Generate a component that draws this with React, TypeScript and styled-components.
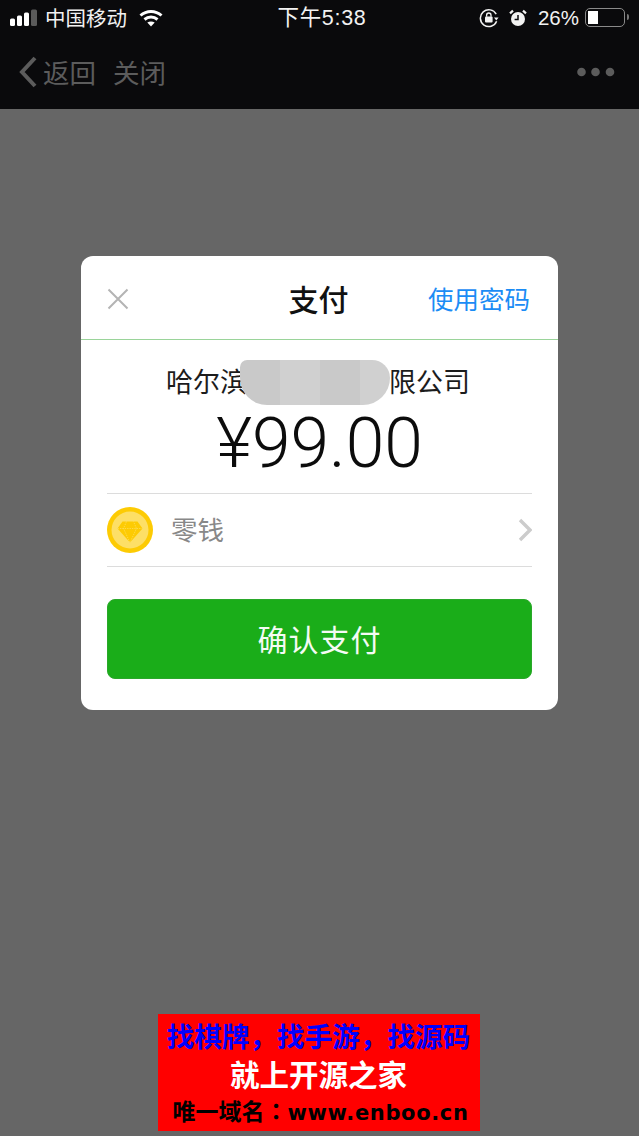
import React from "react";
import styled, { createGlobalStyle } from "styled-components";

const CJK = `"Liberation Sans", "Noto Sans CJK SC", sans-serif`;

const GlobalStyle = createGlobalStyle`
  html, body {
    margin: 0;
    padding: 0;
    background: #666666;
    font-family: ${CJK};
  }
  * {
    box-sizing: border-box;
  }
`;

const Screen = styled.div`
  width: 639px;
  height: 1136px;
  display: flex;
  flex-direction: column;
  overflow: hidden;
  background: #666666;
`;

const TopArea = styled.header`
  height: 109px;
  flex-shrink: 0;
  background: #0a0a0c;
`;

const StatusBar = styled.div`
  height: 36px;
  padding: 0 10px 2px;
  display: grid;
  grid-template-columns: 1fr auto 1fr;
  align-items: center;
  color: #f2f2f2;
  font-size: 20.5px;
`;

const StatusLeft = styled.div`
  display: flex;
  align-items: center;
`;

const StatusRight = styled.div`
  display: flex;
  align-items: center;
  justify-content: flex-end;
  padding-right: 4px;
  gap: 10px;
`;

const Carrier = styled.span`
  margin: 0 12px 2px 7px;
`;

const Time = styled.span`
  margin: 0 0 4px 5px;
  font-size: 21.5px;
  letter-spacing: 0.7px;
`;

const Percent = styled.span`
  margin: 0 -4px 0 1px;
`;

const Battery = styled.div`
  width: 40px;
  height: 19px;
  padding: 2px;
  border: 1.5px solid #8a8a8a;
  border-radius: 5px;
  position: relative;
  &::after {
    content: "";
    position: absolute;
    right: -5px;
    top: 5px;
    width: 2px;
    height: 6px;
    background: #777;
    border-radius: 0 2px 2px 0;
  }
`;

const BatteryFill = styled.div`
  width: 10px;
  height: 100%;
  background: #fff;
`;

const NavBar = styled.nav`
  height: 73px;
  padding: 0 24px 2px 19px;
  display: flex;
  align-items: center;
  color: #5c5c5c;
  font-size: 26.5px;
`;

const NavBack = styled.span`
  margin-left: 6px;
`;

const NavClose = styled.span`
  margin-left: 17px;
  flex: 1;
`;

const Content = styled.main`
  flex: 1;
  display: flex;
  flex-direction: column;
  align-items: center;
  padding: 147px 0 5px;
`;

const Modal = styled.section`
  width: 477px;
  height: 454px;
  background: #fff;
  border-radius: 12px;
  overflow: hidden;
`;

const ModalHeader = styled.div`
  height: 84px;
  padding: 2px 28px 0 26px;
  display: grid;
  grid-template-columns: 1fr auto 1fr;
  align-items: center;
  border-bottom: 1px solid #9ad49a;
`;

const ModalTitle = styled.h2`
  margin: 0 0 2px;
  font-size: 30px;
  font-weight: 500;
  color: #111;
`;

const PasswordLink = styled.a`
  justify-self: end;
  margin-bottom: 2px;
  font-size: 25.5px;
  color: #1b8cf5;
`;

const ModalBody = styled.div`
  padding: 0 26px;
`;

const Merchant = styled.div`
  height: 81px;
  padding-right: 3px;
  display: flex;
  align-items: center;
  justify-content: center;
  font-size: 27px;
  color: #1c1c1c;
`;

const Redaction = styled.div`
  width: 150px;
  height: 45px;
  margin: 3px -1px 0 -7px;
  position: relative;
  border-radius: 8px 20px 30px 30px;
  background: linear-gradient(
    90deg,
    #c9c9c9 0 40px,
    #d0d0d0 40px 80px,
    #c9c9c9 80px 120px,
    #d0d0d0 120px
  );
`;

const Amount = styled.div`
  height: 69px;
  margin: -12px 0 15px;
  text-align: center;
  font-family: Roboto, "Liberation Sans", sans-serif;
  font-weight: 300;
  font-size: 69.5px;
  line-height: 69px;
  color: #0c0c0c;
`;

const MethodRow = styled.div`
  height: 74px;
  display: flex;
  align-items: center;
  border-top: 1px solid #dcdcdc;
  border-bottom: 1px solid #dcdcdc;
`;

const MethodName = styled.span`
  flex: 1;
  margin: 0 0 4px 18px;
  font-size: 26.5px;
  color: #888;
`;

const PayButton = styled.button`
  display: block;
  width: 100%;
  height: 80px;
  margin-top: 32px;
  padding-bottom: 4px;
  border: 1px solid #2aa82a;
  border-radius: 8px;
  background: #1aad19;
  color: #f4fbf4;
  font-family: inherit;
  font-size: 30px;
  letter-spacing: 1px;
`;

const Banner = styled.aside`
  width: 322px;
  height: 117px;
  margin: auto 2px 0 0;
  background: #ff0000;
  font-family: "Noto Sans CJK SC", sans-serif;
  font-weight: 700;
  text-align: center;
`;

const BannerLine = styled.div<{ $color: string; $size: number; $height: number; $inset?: number }>`
  padding-left: ${({ $inset }) => $inset ?? 0}px;
  color: ${({ $color }) => $color};
  font-size: ${({ $size }) => $size}px;
  line-height: ${({ $height }) => $height}px;
  white-space: nowrap;
`;

const BannerComma = styled.span`
  font-family: "Noto Sans CJK KR", sans-serif;
`;

const BannerColon = styled.span`
  font-family: "Noto Sans CJK TC", sans-serif;
`;

const BannerDomain = styled.span`
  font-family: "DejaVu Sans", sans-serif;
  font-size: 21px;
  letter-spacing: 0.65px;
`;

const SignalIcon = () => (
  <svg width="28" height="18" viewBox="0 0 28 18">
    <rect x="0" y="9.5" width="5" height="7.5" rx="1.5" fill="#fff" />
    <rect x="7" y="6.5" width="5" height="10.5" rx="1.5" fill="#fff" />
    <rect x="14" y="3.5" width="5" height="13.5" rx="1.5" fill="#fff" />
    <rect x="21" y="0.5" width="6" height="16.5" rx="1.5" fill="#5a5a5a" />
  </svg>
);

const WifiIcon = () => (
  <svg width="24" height="18" viewBox="0 0 24 18" fill="none" stroke="#fff" strokeWidth="3">
    <path d="M1.5 6.5C7.5 1 16.5 1 22.5 6.5" />
    <path d="M5.5 10.5C9.2 7.3 14.8 7.3 18.5 10.5" />
    <path d="M12 17.5L8.3 13.6C10.5 12 13.5 12 15.7 13.6Z" fill="#fff" stroke="none" />
  </svg>
);

const RotationLockIcon = () => (
  <svg width="20" height="20" viewBox="0 0 20 20" fill="none">
    <path d="M17.2 6.2A8.4 8.4 0 1 0 17.6 13.2" stroke="#f2f2f2" strokeWidth="1.5" />
    <path d="M15 9.5h4.6l-2.3 3z" fill="#f2f2f2" />
    <rect x="6" y="8.6" width="7.6" height="5.8" rx="1" fill="#f2f2f2" />
    <path d="M7.6 8.8V7.2a2.2 2.2 0 0 1 4.4 0v1.6" stroke="#f2f2f2" strokeWidth="1.3" />
  </svg>
);

const AlarmIcon = () => (
  <svg width="18" height="18" viewBox="0 0 18 18" fill="none">
    <circle cx="9" cy="10" r="7" fill="#f2f2f2" />
    <path d="M9 6v4.4H5.6" stroke="#0a0a0c" strokeWidth="1.5" />
    <path d="M1 4.4L4 1.6M17 4.4L14 1.6" stroke="#f2f2f2" strokeWidth="2.2" />
  </svg>
);

const BackChevron = () => (
  <svg width="18" height="32" viewBox="0 0 18 32" fill="none">
    <path d="M16 2L3 16l13 14" stroke="#5c5c5c" strokeWidth="4" />
  </svg>
);

const MoreDots = () => (
  <svg width="38" height="10" viewBox="0 0 38 10" fill="#5c5c5c">
    <circle cx="4.5" cy="5" r="4.3" />
    <circle cx="18.5" cy="5" r="4.3" />
    <circle cx="33" cy="5" r="4.3" />
  </svg>
);

const CloseIcon = () => (
  <svg width="22" height="22" viewBox="0 0 22 22" stroke="#b4b4b4" strokeWidth="2">
    <path d="M1.5 1.5l19 19M20.5 1.5l-19 19" />
  </svg>
);

const CoinIcon = () => (
  <svg width="46" height="46" viewBox="0 0 46 46">
    <circle cx="23" cy="23" r="23" fill="#fdcb03" />
    <circle cx="23" cy="23" r="18.5" fill="#fddf66" />
    <path d="M15.5 14.5h15l5 7L23 35.5 10.5 21.5z" fill="#fdcb03" />
    <path d="M10.5 21.5h25M19.5 14.5l-3 7L23 35.5l6.5-14-3-7" fill="none" stroke="#fddf66" strokeWidth="0.7" strokeDasharray="1.4 1" />
  </svg>
);

const ChevronRight = () => (
  <svg width="14" height="24" viewBox="0 0 14 24" fill="none">
    <path d="M2 2l10 10L2 22" stroke="#cccccc" strokeWidth="3.4" />
  </svg>
);

export default function App() {
  return (
    <Screen>
      <GlobalStyle />
      <TopArea>
        <StatusBar>
          <StatusLeft>
            <SignalIcon />
            <Carrier>中国移动</Carrier>
            <WifiIcon />
          </StatusLeft>
          <Time>下午5:38</Time>
          <StatusRight>
            <RotationLockIcon />
            <AlarmIcon />
            <Percent>26%</Percent>
            <Battery>
              <BatteryFill />
            </Battery>
          </StatusRight>
        </StatusBar>
        <NavBar>
          <BackChevron />
          <NavBack>返回</NavBack>
          <NavClose>关闭</NavClose>
          <MoreDots />
        </NavBar>
      </TopArea>
      <Content>
        <Modal>
          <ModalHeader>
            <CloseIcon />
            <ModalTitle>支付</ModalTitle>
            <PasswordLink>使用密码</PasswordLink>
          </ModalHeader>
          <ModalBody>
            <Merchant>
              <span>哈尔滨</span>
              <Redaction />
              <span>限公司</span>
            </Merchant>
            <Amount>¥99.00</Amount>
            <MethodRow>
              <CoinIcon />
              <MethodName>零钱</MethodName>
              <ChevronRight />
            </MethodRow>
            <PayButton>确认支付</PayButton>
          </ModalBody>
        </Modal>
        <Banner>
          <BannerLine $color="#0000ff" $size={27.6} $height={43}>
            找棋牌<BannerComma>，</BannerComma>找手游<BannerComma>，</BannerComma>找源码
          </BannerLine>
          <BannerLine $color="#ffffff" $size={29.5} $height={33}>就上开源之家</BannerLine>
          <BannerLine $color="#000000" $size={23} $height={41} $inset={4}>
            唯一域名<BannerColon>：</BannerColon><BannerDomain>www.enboo.cn</BannerDomain>
          </BannerLine>
        </Banner>
      </Content>
    </Screen>
  );
}
